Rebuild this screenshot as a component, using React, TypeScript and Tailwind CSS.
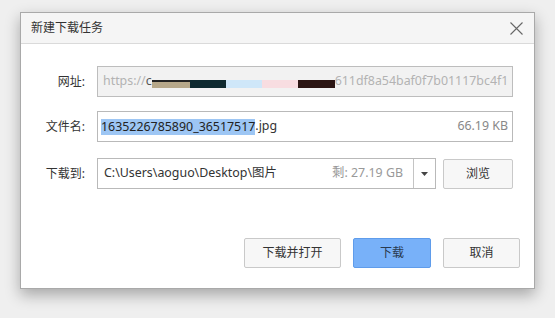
export default function App() {
  const font = { fontFamily: '"Noto Sans", "Noto Sans CJK SC", sans-serif' };
  return (
    <div className="w-[555px] h-[318px] bg-[#efefef] pt-[12px] pl-[20px] overflow-hidden" style={font}>
      <div className="w-[515px] h-[277px] bg-white border border-[#a9a9a9] shadow-[0_6px_14px_rgba(0,0,0,0.3)] flex flex-col">
        {/* header */}
        <div className="h-[31px] shrink-0 bg-[#f5f5f5] border-b border-[#dadada] flex items-center justify-between pl-[10px] pr-[11px]">
          <span className="text-[12px] text-[#333] leading-none">新建下载任务</span>
          <svg width="13" height="13" viewBox="0 0 13 13" className="mt-[1px]">
            <path d="M0.5 0.5 L12.5 12.5 M12.5 0.5 L0.5 12.5" stroke="#666" strokeWidth="1.1" fill="none" />
          </svg>
        </div>

        {/* body */}
        <div className="flex-1 flex flex-col pt-[22px]">
          {/* url */}
          <div className="flex items-center h-[31px]">
            <span className="w-[66px] text-right text-[12px] text-[#333] pr-[2px]">网址:</span>
            <div className="ml-[10px] w-[416px] h-[31px] bg-[#f2f2f2] border border-[#bdbdbd] flex items-center pl-[5px] overflow-hidden whitespace-nowrap text-[12.4px] text-[#b3b3b3]">
              <span>https://</span>
              <span className="text-[#555]">c</span>
              <span className="inline-block w-[38px] h-[8px] bg-[#b7a88a] border-t-2 border-[#222] mt-[4px]" />
              <span className="inline-block w-[36px] h-[8px] bg-[#0f2a30] mt-[4px]" />
              <span className="inline-block w-[36px] h-[8px] bg-[#cfe7f9] mt-[4px]" />
              <span className="inline-block w-[36px] h-[8px] bg-[#f8dde1] mt-[4px]" />
              <span className="inline-block w-[37px] h-[8px] bg-[#2c1513] mt-[4px]" />
              <span>611df8a54baf0f7b01117bc4f1</span>
            </div>
          </div>

          {/* filename */}
          <div className="flex items-center h-[31px] mt-[14px]">
            <span className="w-[66px] text-right text-[12px] text-[#333] pr-[2px]">文件名:</span>
            <div className="ml-[10px] w-[416px] h-[31px] bg-white border border-[#b9b9b9] flex items-center pl-[3px] pr-[4px] text-[12.4px] whitespace-nowrap">
              <span className="bg-[#9dc6f4] text-[#222] leading-[16px]">1635226785890_36517517</span>
              <span className="text-[#333]">.jpg</span>
              <span className="ml-auto text-[#888]">66.19 KB</span>
            </div>
          </div>

          {/* save to */}
          <div className="flex items-center h-[31px] mt-[16px]">
            <span className="w-[66px] text-right text-[12px] text-[#333] pr-[2px]">下载到:</span>
            <div className="ml-[10px] w-[339px] h-[31px] bg-white border border-[#b9b9b9] flex items-stretch text-[12.4px] whitespace-nowrap">
              <div className="flex-1 flex items-center pl-[6px] pr-[10px]">
                <span className="text-[#333]">C:\Users\aoguo\Desktop\图片</span>
                <span className="ml-auto text-[#999]">剩: 27.19 GB</span>
              </div>
              <div className="w-[22px] border-l border-[#c4c4c4] flex items-center justify-center">
                <svg width="7" height="4" viewBox="0 0 7 4">
                  <path d="M0 0 L7 0 L3.5 4 Z" fill="#444" />
                </svg>
              </div>
            </div>
            <button className="ml-[7px] w-[70px] h-[30px] bg-[#f7f7f7] border border-[#c9c9c9] rounded-[2px] text-[12px] text-[#333]">
              浏览
            </button>
          </div>
        </div>

        {/* footer */}
        <div className="flex justify-end gap-[12px] pr-[14px] pb-[20px]">
          <button className="w-[97px] h-[30px] bg-[#f7f7f7] border border-[#c9c9c9] rounded-[2px] text-[12px] text-[#333]">
            下载并打开
          </button>
          <button className="w-[78px] h-[30px] bg-[#78b1f9] border border-[#5f9ceb] rounded-[2px] text-[12px] text-[#2a3a50]">
            下载
          </button>
          <button className="w-[77px] h-[30px] bg-[#f7f7f7] border border-[#c9c9c9] rounded-[2px] text-[12px] text-[#333]">
            取消
          </button>
        </div>
      </div>
    </div>
  );
}
